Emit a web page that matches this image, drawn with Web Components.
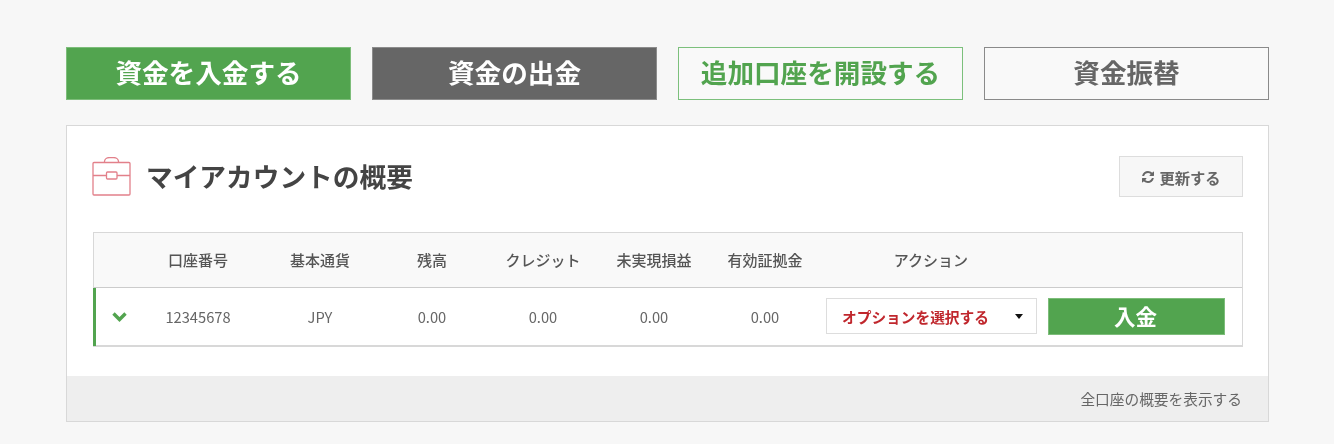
<!DOCTYPE html>
<html lang="ja">
<head>
<meta charset="utf-8">
<title>マイアカウントの概要</title>
<style>
  html, body { margin: 0; background: #f7f7f7; }
  body {
    box-sizing: border-box;
    color: #555;
    filter: blur( 0.4px );
    font-family: "Noto Sans CJK JP", "Noto Sans", sans-serif;
    height: 444px;
    overflow: hidden;
    padding: 47px 65px 0 66px;
  }
</style>
</head>
<body>
  <sa-action-bar>
    <sa-action-button kind="primary" label="資金を入金する"></sa-action-button>
    <sa-action-button kind="dark" label="資金の出金"></sa-action-button>
    <sa-action-button kind="outline" label="追加口座を開設する"></sa-action-button>
    <sa-action-button kind="plain" label="資金振替"></sa-action-button>
  </sa-action-bar>

  <sa-summary-card heading="マイアカウントの概要" footer="全口座の概要を表示する">
    <sa-refresh-button slot="actions" label="更新する"></sa-refresh-button>
    <sa-account-table>
      <sa-account-row
        number="12345678"
        currency="JPY"
        balance="0.00"
        credit="0.00"
        profit="0.00"
        margin="0.00"
        option="オプションを選択する"
        deposit="入金"></sa-account-row>
    </sa-account-table>
  </sa-summary-card>

<script>
  // Column widths are shared by the table header and its rows
  const COLUMNS = '122px 122px 102px 120px 102px 120px 212px 206px';

  class ActionBar extends HTMLElement {
    constructor() {
      super();
      this.attachShadow( {mode: 'open'} );
      this.shadowRoot.innerHTML = /* template */ `
        <style>
          :host {
            display: grid;
            gap: 21px;
            grid-template-columns: repeat( 4, 1fr );
          }
        </style>
        <slot></slot>
      `;
    }
  }

  class ActionButton extends HTMLElement {
    constructor() {
      super();
      this.attachShadow( {mode: 'open'} );
      this.shadowRoot.innerHTML = /* template */ `
        <style>
          :host {
            display: block;
          }

          button {
            background: #52a44f;
            border: solid 1px #7dbd7a;
            box-sizing: border-box;
            color: #ffffff;
            cursor: pointer;
            display: block;
            font-family: inherit;
            font-size: 26.6px;
            font-weight: 700;
            height: 53px;
            line-height: 47px;
            margin: 0;
            padding: 0 0 4px 0;
            width: 100%;
          }

          :host( [kind=dark] ) button {
            background: #666666;
            border-color: #8c8c8c;
          }

          :host( [kind=outline] ) button {
            background: #f9f9f9;
            border-color: #7cc07c;
            color: #52a44f;
          }

          :host( [kind=plain] ) button {
            background: #f9f9f9;
            border-color: #8a8a8a;
            color: #666666;
          }
        </style>
        <button type="button"></button>
      `;
      this.shadowRoot.querySelector( 'button' ).textContent = this.getAttribute( 'label' );
    }
  }

  class RefreshButton extends HTMLElement {
    constructor() {
      super();
      this.attachShadow( {mode: 'open'} );
      this.shadowRoot.innerHTML = /* template */ `
        <style>
          :host {
            display: block;
          }

          button {
            align-items: center;
            background: #f7f7f7;
            border: solid 1px #dddddd;
            box-sizing: border-box;
            color: #666666;
            cursor: pointer;
            display: flex;
            font-family: inherit;
            font-size: 15.3px;
            font-weight: 700;
            gap: 4px;
            height: 41px;
            justify-content: center;
            padding: 0;
            width: 124px;
          }

          svg {
            fill: #666666;
            height: 14px;
            width: 14px;
          }
        </style>
        <button type="button">
          <svg viewBox="0 0 1792 1792"><path d="M1639 1056q0 5-1 7-64 268-268 434.5t-478 166.5q-146 0-282.5-55t-243.5-157l-129 129q-19 19-45 19t-45-19-19-45v-448q0-26 19-45t45-19h448q26 0 45 19t19 45-19 45l-137 137q71 66 161 102t187 36q134 0 250-65t186-179q11-17 53-117 8-23 30-23h192q13 0 22.5 9.5t9.5 22.5zm25-800v448q0 26-19 45t-45 19h-448q-26 0-45-19t-19-45 19-45l138-138q-148-137-349-137-134 0-250 65t-186 179q-11 17-53 117-8 23-30 23h-199q-13 0-22.5-9.5t-9.5-22.5v-7q65-268 270-434.5t480-166.5q146 0 284 55.5t245 156.5l130-129q19-19 45-19t45 19 19 45z"/></svg>
          <span></span>
        </button>
      `;
      this.shadowRoot.querySelector( 'span' ).textContent = this.getAttribute( 'label' );
    }
  }

  class SummaryCard extends HTMLElement {
    constructor() {
      super();
      this.attachShadow( {mode: 'open'} );
      this.shadowRoot.innerHTML = /* template */ `
        <style>
          :host {
            background: #ffffff;
            border: solid 1px #d8d8d8;
            box-sizing: border-box;
            display: block;
            height: 297px;
            margin-top: 25px;
          }

          header {
            align-items: center;
            display: flex;
            height: 41px;
            padding: 30px 25px 0 25px;
          }

          svg {
            flex: none;
            height: 39px;
            margin-right: 15px;
            width: 39px;
          }

          h2 {
            color: #444444;
            flex-grow: 1;
            font-size: 26.7px;
            font-weight: 700;
            line-height: 39px;
            margin: 0 0 2px 0;
          }

          main {
            padding: 35px 25px 29px 26px;
          }

          footer {
            background: #eeeeee;
            color: #666666;
            font-size: 14.7px;
            height: 45px;
            line-height: 46px;
            padding-right: 26px;
            text-align: right;
          }
        </style>
        <header>
          <svg viewBox="0 0 39 39" fill="none" stroke="#e2808a" stroke-width="1.3">
            <rect x="1" y="5.5" width="37" height="32.5" rx="1"/>
            <path d="M1 18.5h14M25 18.5h13"/>
            <rect x="14.5" y="15" width="10.5" height="7" rx="1"/>
            <path d="M12.5 5.5v-1a5 4 0 0 1 5-4h4a5 4 0 0 1 5 4v1"/>
          </svg>
          <h2></h2>
          <slot name="actions"></slot>
        </header>
        <main><slot></slot></main>
        <footer></footer>
      `;
      this.shadowRoot.querySelector( 'h2' ).textContent = this.getAttribute( 'heading' );
      this.shadowRoot.querySelector( 'footer' ).textContent = this.getAttribute( 'footer' );
    }
  }

  class AccountTable extends HTMLElement {
    constructor() {
      super();
      this.attachShadow( {mode: 'open'} );
      this.shadowRoot.innerHTML = /* template */ `
        <style>
          :host {
            border: solid 1px #d8d8d8;
            border-bottom-width: 2px;
            box-sizing: border-box;
            display: block;
            height: 115px;
          }

          .head {
            background: #f9f9f9;
            border-bottom: solid 1px #cccccc;
            color: #555555;
            display: grid;
            font-size: 15px;
            font-weight: 500;
            grid-template-columns: 43px ${COLUMNS};
            height: 54px;
            line-height: 53px;
            text-align: center;
          }
        </style>
        <div class="head">
          <span></span>
          <span>口座番号</span>
          <span>基本通貨</span>
          <span>残高</span>
          <span>クレジット</span>
          <span>未実現損益</span>
          <span>有効証拠金</span>
          <span>アクション</span>
          <span></span>
        </div>
        <slot></slot>
      `;
    }
  }

  class AccountRow extends HTMLElement {
    constructor() {
      super();
      this.attachShadow( {mode: 'open'} );
      this.shadowRoot.innerHTML = /* template */ `
        <style>
          :host {
            align-items: center;
            border-left: solid 3px #52a44f;
            box-sizing: border-box;
            color: #666666;
            display: grid;
            font-size: 14.7px;
            grid-template-columns: 41px ${COLUMNS};
            height: 58px;
            margin-left: -1px;
            padding-bottom: 2px;
            text-align: center;
          }

          svg {
            display: block;
            fill: none;
            height: 10px;
            margin: 2px 0 0 16px;
            stroke: #52a44f;
            stroke-width: 3.4;
            width: 15px;
          }

          .select {
            align-items: center;
            background: #ffffff;
            border: solid 1px #dddddd;
            box-sizing: border-box;
            color: #c0272d;
            display: flex;
            font-weight: 700;
            height: 36px;
            justify-content: space-between;
            margin-left: 1px;
            padding: 0 13px 0 15px;
          }

          .select i {
            border-left: solid 4px transparent;
            border-right: solid 4px transparent;
            border-top: solid 5px #111111;
            height: 0;
            width: 0;
          }

          button {
            background: #52a44f;
            border: solid 1px #7dbd7a;
            box-sizing: border-box;
            color: #ffffff;
            cursor: pointer;
            display: block;
            font-family: inherit;
            font-size: 21.5px;
            font-weight: 700;
            height: 37px;
            line-height: 33px;
            margin-left: 11px;
            padding: 0 2px 2px 0;
            width: 177px;
          }
        </style>
        <svg viewBox="0 0 15 10"><path d="M1.5 1.5l6 6 6-6"/></svg>
        <span data-field="number"></span>
        <span data-field="currency"></span>
        <span data-field="balance"></span>
        <span data-field="credit"></span>
        <span data-field="profit"></span>
        <span data-field="margin"></span>
        <div class="select"><span data-field="option"></span><i></i></div>
        <button type="button" data-field="deposit"></button>
      `;

      this.shadowRoot.querySelectorAll( '[data-field]' ).forEach( ( item ) => {
        item.textContent = this.getAttribute( item.dataset.field );
      } );
    }
  }

  window.customElements.define( 'sa-action-bar', ActionBar );
  window.customElements.define( 'sa-action-button', ActionButton );
  window.customElements.define( 'sa-refresh-button', RefreshButton );
  window.customElements.define( 'sa-summary-card', SummaryCard );
  window.customElements.define( 'sa-account-table', AccountTable );
  window.customElements.define( 'sa-account-row', AccountRow );
</script>
</body>
</html>
